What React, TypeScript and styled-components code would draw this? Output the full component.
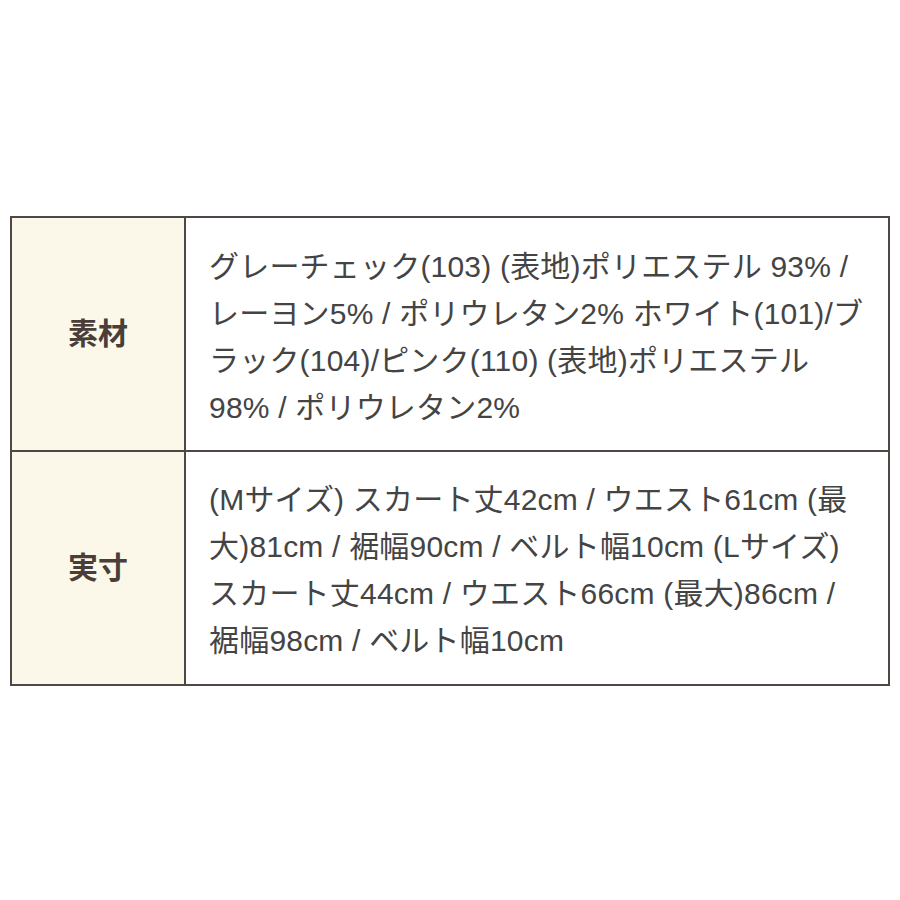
import { createGlobalStyle } from 'styled-components';
import styled from 'styled-components';

const Global = createGlobalStyle`
	html, body {
		margin: 0;
		padding: 0;
		background: #ffffff;
	}
`;

const Page = styled.div`
	width: 900px;
	height: 900px;
	padding: 216px 0 0 10px;
	box-sizing: border-box;
	font-family: "Liberation Sans", "Noto Sans CJK JP", sans-serif;
`;

const Table = styled.div`
	width: 880px;
	border: 2px solid #4e4743;
	box-sizing: border-box;
`;

const Row = styled.div<{ first?: boolean }>`
	display: grid;
	grid-template-columns: 174px 1fr;
	border-top: ${({ first }) => (first ? 'none' : '2px solid #4e4743')};
`;

const Label = styled.div`
	display: flex;
	align-items: center;
	justify-content: center;
	background: #fcf8e9;
	border-right: 2px solid #4e4743;
	color: #4a3f38;
	font-size: 30px;
	font-weight: bold;
	padding-bottom: 7px;
`;

const Body = styled.div<{ top: number; bottom: number }>`
	padding: ${({ top, bottom }) => `${top}px 16px ${bottom}px 23px`};
	color: #444444;
	font-size: 30px;
	line-height: 47px;
	letter-spacing: 0.2px;
	white-space: nowrap;
`;

const rows = [
	{
		label: '素材',
		top: 25,
		bottom: 19,
		lines: [
			'グレーチェック(103) (表地)ポリエステル 93% /',
			'レーヨン5% / ポリウレタン2% ホワイト(101)/ブ',
			'ラック(104)/ピンク(110) (表地)ポリエステル',
			'98% / ポリウレタン2%',
		],
	},
	{
		label: '実寸',
		top: 24,
		bottom: 20,
		lines: [
			'(Mサイズ) スカート丈42cm / ウエスト61cm (最',
			'大)81cm / 裾幅90cm / ベルト幅10cm (Lサイズ)',
			'スカート丈44cm / ウエスト66cm (最大)86cm /',
			'裾幅98cm / ベルト幅10cm',
		],
	},
];

export default function App() {
	return (
		<>
			<Global />
			<Page>
				<Table>
					{rows.map((row, i) => (
						<Row key={row.label} first={i === 0}>
							<Label>{row.label}</Label>
							<Body top={row.top} bottom={row.bottom}>
								{row.lines.map((line, j) => (
									<div key={j}>{line}</div>
								))}
							</Body>
						</Row>
					))}
				</Table>
			</Page>
		</>
	);
}
